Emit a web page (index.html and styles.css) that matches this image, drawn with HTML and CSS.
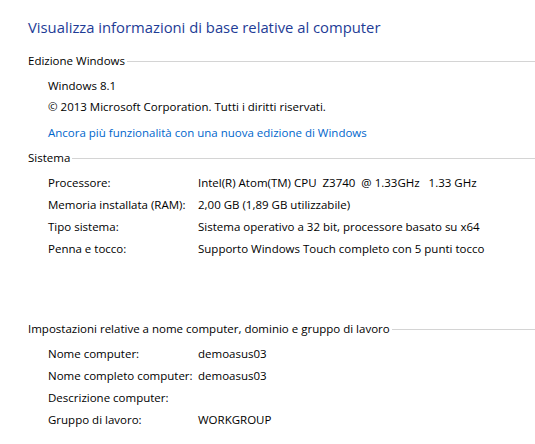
FILE: index.html
```html
<!DOCTYPE html>
<html lang="it">
<head>
  <meta charset="UTF-8">
  <title>Sistema</title>
  <link rel="stylesheet" href="styles.css">
</head>
<body>
  <div class="page">
    <h1 class="title">Visualizza informazioni di base relative al computer</h1>

    <div class="group">
      <div class="group-head"><span>Edizione Windows</span></div>
      <div class="group-body">
        <p class="line">Windows 8.1</p>
        <p class="line">© 2013 Microsoft Corporation. Tutti i diritti riservati.</p>
        <a class="line link" href="#">Ancora più funzionalità con una nuova edizione di Windows</a>
      </div>
    </div>

    <div class="group">
      <div class="group-head"><span>Sistema</span></div>
      <div class="group-body props">
        <span>Processore:</span><span>Intel(R) Atom(TM) CPU&nbsp; Z3740&nbsp; @ 1.33GHz&nbsp;&nbsp; 1.33 GHz</span>
        <span>Memoria installata (RAM):</span><span>2,00 GB (1,89 GB utilizzabile)</span>
        <span>Tipo sistema:</span><span>Sistema operativo a 32 bit, processore basato su x64</span>
        <span>Penna e tocco:</span><span>Supporto Windows Touch completo con 5 punti tocco</span>
      </div>
    </div>

    <div class="group group-far">
      <div class="group-head"><span>Impostazioni relative a nome computer, dominio e gruppo di lavoro</span></div>
      <div class="group-body props">
        <span>Nome computer:</span><span>demoasus03</span>
        <span>Nome completo computer:</span><span>demoasus03</span>
        <span>Descrizione computer:</span><span></span>
        <span>Gruppo di lavoro:</span><span>WORKGROUP</span>
      </div>
    </div>
  </div>
</body>
</html>
```

FILE: styles.css
```css
body {
  margin: 0;
  background-color: #ffffff;
  color: #000;
  font-family: 'Segoe UI', 'Open Sans', sans-serif;
  font-size: 11.5px;
}
.page {
  padding: 17px 0 0 28px;
}
.title {
  margin: 0 0 13px 0;
  font-size: 14.8px;
  font-weight: normal;
  line-height: 20px;
  color: #1e3c96;
}
.group {
  margin-bottom: 4px;
}
.group-far {
  margin-top: 58px;
}
.group-head {
  display: flex;
  align-items: center;
  height: 22px;
  line-height: 22px;
  white-space: nowrap;
}
.group-head::after {
  content: "";
  flex: 1;
  height: 1px;
  margin: 1px 0 0 2px;
  background-color: #d4d4d4;
}
.group-body {
  padding: 3px 0 0 20px;
}
.line {
  display: block;
  margin: 0;
  line-height: 21px;
}
.link {
  margin-top: 5px;
  color: #0066cc;
  text-decoration: none;
}
.props {
  display: grid;
  grid-template-columns: 150px 1fr;
  line-height: 22px;
  padding-top: 3px;
  white-space: nowrap;
}
```
